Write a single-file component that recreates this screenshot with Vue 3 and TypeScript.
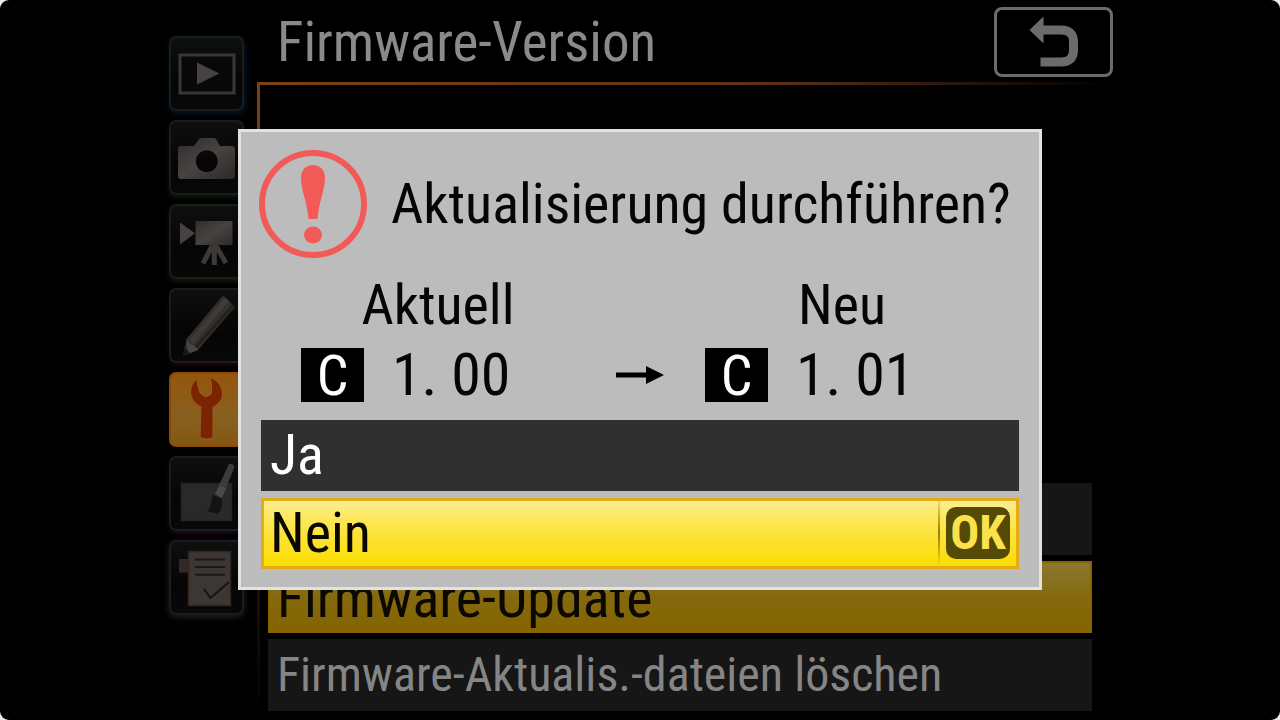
<script setup lang="ts">
import { ref } from 'vue'

interface Tab {
  id: string
  label: string
}

interface Version {
  id: string
  label: string
  value: string
}

const tabs: Tab[] = [
  { id: 'playback', label: 'Wiedergabe' },
  { id: 'photo', label: 'Fotoaufnahme' },
  { id: 'movie', label: 'Filmaufnahme' },
  { id: 'custom', label: 'Individualfunktionen' },
  { id: 'setup', label: 'System' },
  { id: 'retouch', label: 'Bildbearbeitung' },
  { id: 'mymenu', label: 'Benutzerdefiniertes Menü' },
]

const versions: Version[] = [
  { id: 'current', label: 'Aktuell', value: '1. 00' },
  { id: 'next', label: 'Neu', value: '1. 01' },
]

const choices: string[] = ['Ja', 'Nein']
const selected = ref('Nein')
const activeTab = 'setup'
</script>

<template>
  <div class="screen">
    <nav class="tabs">
      <button
        v-for="tab in tabs"
        :key="tab.id"
        type="button"
        class="tab"
        :class="[tab.id, { active: tab.id === activeTab }]"
        :aria-label="tab.label"
      >
        <svg viewBox="0 0 75 75" aria-hidden="true">
          <defs>
            <linearGradient :id="`shade-${tab.id}`" x1="0" y1="0" x2="1" y2="1">
              <stop offset="0" stop-color="#302e2e" />
              <stop offset="0.5" stop-color="#474341" />
              <stop offset="1" stop-color="#2b2827" />
            </linearGradient>
          </defs>
          <g v-if="tab.id === 'playback'">
            <rect x="11" y="19" width="54" height="38" fill="#080808" stroke="#3c3634" stroke-width="3" />
            <path d="M28 26.5 50.5 37.5 28 48.5Z" fill="#464241" />
          </g>
          <g v-else-if="tab.id === 'photo'">
            <path
              fill-rule="evenodd"
              :fill="`url(#shade-${tab.id})`"
              d="M12 26H25L30 19Q31 18 32 18H45Q46 18 47 19L51 26H63Q66 26 66 29V56Q66 59 63 59H12Q9 59 9 56V29Q9 26 12 26ZM37.700 30.300a11 11 0 1 0 .1 0Z"
            />
          </g>
          <g v-else-if="tab.id === 'movie'" :fill="`url(#shade-${tab.id})`">
            <path d="M11 18.500 26 29.300 11 40.500Z" fill="#464241" />
            <rect x="26.500" y="17" width="37" height="24" />
            <path d="M34 59.500 43 42M45.300 41V61M57 59 47 42" stroke="#3d3938" stroke-width="5" fill="none" />
          </g>
          <g v-else-if="tab.id === 'custom'">
            <path d="M17.500 51 54 7.500 66 19 29 62 14 68Z" fill="#332f2c" />
            <path d="M21 51.500 56 9.500 60 13 24 56Z" fill="#3f3b38" />
            <path d="M26 60 64 17.500" stroke="#26211d" stroke-width="3" />
            <path d="M17.500 51 21 56 26 58 29 62 19 66Z" fill="#4b4644" />
            <path d="M16 60 21 65 14 68Z" fill="#1b1918" />
          </g>
          <g v-else-if="tab.id === 'setup'">
            <path
              fill="#7a2402"
              stroke="#9a5a20"
              stroke-width="1"
              d="M28 7C22 11 20 19 23 26C25 31 29 33 32 35L31 64Q31 67 37.500 67Q44 67 44 64L44 35C48 33 51 30 53 26C55 18 51 9 41 5.500C43 12 43 17 42 22L36.500 25L31 21C30 16 28 12 28 7Z"
            />
          </g>
          <g v-else-if="tab.id === 'retouch'">
            <rect x="12.500" y="27.500" width="50" height="37" fill="#2a2929" stroke="#2e211e" stroke-width="1.500" />
            <path d="M60 8Q64 7 65.500 11L54 40 46.500 36.500Z" fill="#3d3a38" />
            <path d="M51 29 57 32 53 42 46 38Z" fill="#4a4848" />
            <path d="M44 39 53 43Q54 52 49 58L38 55Q43 50 42 46Z" fill="#141212" />
          </g>
          <g v-else>
            <path d="M10 19H19V32.500H10Z" fill="#332a27" />
            <rect x="19.500" y="11.500" width="42" height="54" fill="#3a3735" stroke="#33261f" stroke-width="1.500" />
            <path d="M26 19.500H56M26 27H56M26 34.700H56" stroke="#1b1818" stroke-width="2" />
            <path d="M35 49 41.500 58 60 42" fill="none" stroke="#161313" stroke-width="2" />
          </g>
        </svg>
      </button>
    </nav>

    <main class="page">
      <header class="header">
        <h1>Firmware-Version</h1>
        <button type="button" class="back" aria-label="Zurück">
          <svg viewBox="0 0 119 70" aria-hidden="true">
            <path d="M35.500 23 49.500 9.500V36.500Z" fill="#6b6b6b" />
            <path d="M49 23H67Q79.500 23 79.500 35V43Q79.500 55 67 55H46.500" fill="none" stroke="#6b6b6b" stroke-width="9" />
          </svg>
        </button>
      </header>
      <div class="panel">
        <div class="row"></div>
        <button type="button" class="row current">Firmware-Update</button>
        <button type="button" class="row long">Firmware-Aktualis.-dateien löschen</button>
      </div>
    </main>

    <section class="dialog" role="dialog" aria-labelledby="question">
      <div class="prompt">
        <svg class="alert" viewBox="0 0 108 108" aria-hidden="true">
          <circle cx="54" cy="54" r="51" fill="none" stroke="#f25a57" stroke-width="6" />
          <path d="M42 28C42 20 47 15 54 15S66 20 66 28C66 40 60 51 58.500 69H49.500C48 51 42 40 42 28Z" fill="#f25a57" />
          <ellipse cx="54" cy="85" rx="9" ry="8.500" fill="#f25a57" />
        </svg>
        <h2 id="question">Aktualisierung durchführen?</h2>
      </div>

      <div class="versions">
        <template v-for="(version, index) in versions" :key="version.id">
          <svg v-if="index > 0" class="arrow" viewBox="0 0 48 20" aria-hidden="true">
            <path d="M0 7.500H30V1L48 10 30 19V12.500H0Z" />
          </svg>
          <div class="version">
            <h3>{{ version.label }}</h3>
            <p><span class="chip">C</span><span class="number">{{ version.value }}</span></p>
          </div>
        </template>
      </div>

      <div class="choices">
        <button
          v-for="choice in choices"
          :key="choice"
          type="button"
          class="choice"
          :class="{ selected: choice === selected }"
          @click="selected = choice"
        >
          <span>{{ choice }}</span>
          <span v-if="choice === selected" class="confirm"><span class="ok">OK</span></span>
        </button>
      </div>
    </section>
  </div>
</template>

<style>
body {
  margin: 0;
  background: #e4ebf2;
}
</style>

<style scoped>
.screen {
  position: relative;
  box-sizing: border-box;
  display: grid;
  grid-template-columns: 75px minmax(0, 1fr);
  gap: 13px;
  min-height: 100vh;
  padding: 0 167px 0 169px;
  overflow: hidden;
  border-radius: 9px;
  background: #000;
  font-family: 'Roboto Condensed', 'Liberation Sans', sans-serif;
  font-size: 56px;
  line-height: 70px;
}

h1,
h2,
h3,
p {
  margin: 0;
  font: inherit;
}

button {
  padding: 0;
  border: 0;
  font: inherit;
  text-align: left;
  cursor: pointer;
}

svg {
  display: block;
}

.tabs {
  display: flex;
  flex-direction: column;
  gap: 9px;
  padding-top: 36px;
}

.tab {
  box-sizing: border-box;
  height: 75px;
  border: 2px solid #1a1c1d;
  border-radius: 7px;
  background: linear-gradient(#0e0f0f, #050505 60%, #080808);
}

.tab svg {
  width: 75px;
  height: 75px;
  margin: -2px;
}

.playback {
  box-shadow: 1px 2px 6px #051a2d;
}

.photo {
  box-shadow: 0 3px 4px #051c05;
}

.movie {
  box-shadow: 0 3px 4px #121803;
}

.custom {
  box-shadow: 0 3px 4px #18060a;
}

.retouch {
  box-shadow: 0 3px 4px #1b0524;
}

.mymenu {
  box-shadow: 0 2px 6px #222;
}

.tab.active {
  border-color: #8a4a08;
  background: linear-gradient(#94560c, #87601f 60%, #845712);
}

.page {
  display: flex;
  flex-direction: column;
}

.header {
  display: flex;
  align-items: center;
  justify-content: space-between;
  padding: 7px 0 5px 20px;
  color: #8a8a8a;
}

.header h1 {
  font-size: 55px;
}

.back {
  box-sizing: border-box;
  width: 119px;
  height: 70px;
  border: 3px solid #6b6b6b;
  border-radius: 8px;
  background: #000;
}

.back svg {
  width: 119px;
  height: 70px;
  margin: -3px;
}

.panel {
  display: flex;
  flex: 1;
  flex-direction: column;
  justify-content: flex-end;
  gap: 6px;
  padding: 0 21px 9px 11px;
  background:
    linear-gradient(90deg, #7a4216, #5c3213 60%, #000) top / 100% 3px no-repeat,
    linear-gradient(#7a4216, #3c200e 60%, #000) left / 3px 100% no-repeat;
}

.row {
  box-sizing: border-box;
  height: 72px;
  padding: 0 9px;
  background: #161616;
  color: #858585;
  white-space: nowrap;
}

.row.current {
  padding: 0 7px;
  border: 2px solid #8a6200;
  background: linear-gradient(#8b7830, #84690e 50%, #846400);
  color: #0a0800;
}

.row.long {
  font-size: 48px;
}

.dialog {
  position: absolute;
  inset: 0 0 2px;
  box-sizing: border-box;
  width: calc(100% - 476px);
  height: fit-content;
  margin: auto;
  padding: 18px;
  border: 3px solid #e2e2e2;
  background: #bcbcbc;
  color: #050505;
}

.prompt {
  display: flex;
  align-items: center;
  gap: 24px;
  white-space: nowrap;
}

.alert {
  flex: none;
  width: 108px;
  height: 108px;
}

.versions {
  display: grid;
  grid-template-columns: 1fr 48px 1fr;
  column-gap: 41px;
  align-items: end;
  padding: 12px 42px 10px;
}

.version h3 {
  text-align: center;
}

.version p {
  display: flex;
  align-items: center;
  gap: 28px;
}

.number {
  font-size: 60px;
}

.chip {
  width: 63px;
  height: 54px;
  background: #000;
  color: #fff;
  line-height: 56px;
  text-align: center;
}

.arrow {
  width: 48px;
  height: 20px;
  margin-bottom: 25px;
}

.choices {
  display: grid;
  gap: 7px;
  padding: 0 2px;
}

.choice {
  box-sizing: border-box;
  display: flex;
  align-items: center;
  justify-content: space-between;
  height: 71px;
  padding: 0 9px;
  background: #303030;
  color: #fff;
}

.choice.selected {
  padding: 0 6px;
  border: 3px solid #e3ac14;
  background: linear-gradient(#fdee94, #fce755 30%, #fbe12a 65%, #fadd00);
  color: #0a0800;
}

.confirm {
  padding: 6px 0 6px 6px;
  border-left: 2px solid;
  border-image: linear-gradient(#f5dc60, #a07800, #f5dc10) 1;
}

.ok {
  display: block;
  width: 64px;
  height: 52px;
  border-radius: 10px;
  background: #544a06;
  color: #fbe24a;
  font-size: 48px;
  font-weight: 700;
  line-height: 52px;
  text-align: center;
}
</style>
